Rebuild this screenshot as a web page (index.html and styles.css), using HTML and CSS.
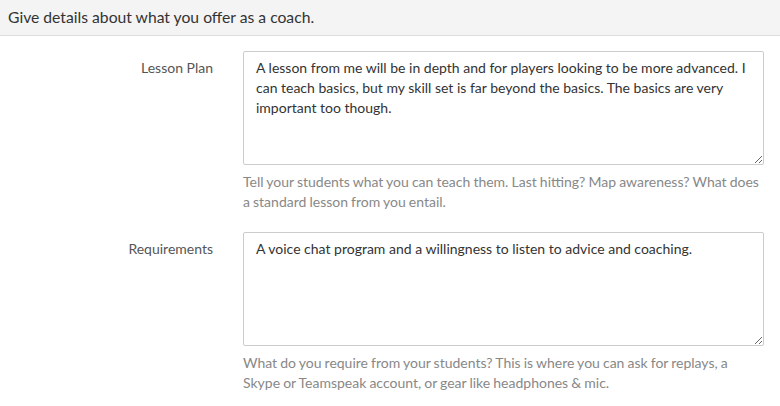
FILE: index.html
```html
<!DOCTYPE html>
<html>
<head>
<meta charset="utf-8">
<link rel="stylesheet" href="styles.css">
</head>
<body>
<div class="header">Give details about what you offer as a coach.</div>
<form class="form">
  <div class="row">
    <label class="label">Lesson Plan</label>
    <div class="field">
      <textarea class="input">A lesson from me will be in depth and for players looking to be more advanced. I can teach basics, but my skill set is far beyond the basics. The basics are very important too though.</textarea>
      <p class="help">Tell your students what you can teach them. Last hitting? Map awareness? What does a standard lesson from you entail.</p>
    </div>
  </div>
  <div class="row">
    <label class="label">Requirements</label>
    <div class="field">
      <textarea class="input">A voice chat program and a willingness to listen to advice and coaching.</textarea>
      <p class="help">What do you require from your students? This is where you can ask for replays, a Skype or Teamspeak account, or gear like headphones &amp; mic.</p>
    </div>
  </div>
</form>
</body>
</html>
```
FILE: styles.css
```css
html, body {
  margin: 0;
  padding: 0;
  background: #fff;
  font-family: Lato, "Open Sans", sans-serif;
  color: #333;
}
.header {
  height: 35px;
  line-height: 35px;
  padding: 0 8px;
  background: #f4f4f4;
  border-bottom: 1px solid #dcdcdc;
  font-size: 15.7px;
  color: #333;
}
.form {
  padding-top: 15px;
}
.row {
  display: flex;
  gap: 30px;
  margin-bottom: 20px;
}
.label {
  width: 213px;
  text-align: right;
  font-size: 14px;
  line-height: 20px;
  padding-top: 7px;
  color: #555;
}
.field {
  width: 521px;
}
.input {
  display: block;
  box-sizing: border-box;
  width: 521px;
  height: 114px;
  margin: 0;
  padding: 6px 12px;
  border: 1px solid #ccc;
  border-radius: 2px;
  font-family: Lato, "Open Sans", sans-serif;
  font-size: 14px;
  line-height: 20px;
  color: #333;
  background: #fff;
}
.help {
  margin: 7px 0 0;
  font-size: 14px;
  line-height: 20px;
  word-spacing: -0.5px;
  color: #888;
}
```
